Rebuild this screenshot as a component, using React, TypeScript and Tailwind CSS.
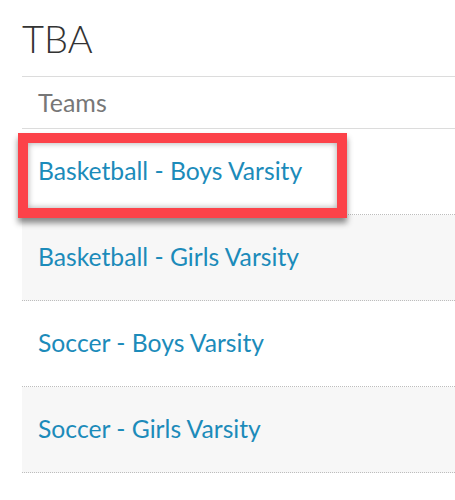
import React from 'react';

const teams = [
  'Basketball - Boys Varsity',
  'Basketball - Girls Varsity',
  'Soccer - Boys Varsity',
  'Soccer - Girls Varsity',
];

export default function App() {
  return (
    <div className="w-[455px] h-[500px] bg-white overflow-hidden" style={{ fontFamily: 'Lato, "Open Sans", sans-serif' }}>
      <div className="pl-[22px]">
        <h1 className="h-[76px] pt-[16px] text-[38px] leading-[44px] font-light text-[#333]">TBA</h1>
        <div className="border-t border-[#dcdcdc] border-b h-[53px] flex items-center pl-[16px] text-[25px] text-[#777]">
          Teams
        </div>
        <div className="relative">
          {teams.map((t, i) => (
            <div
              key={t}
              className={`h-[86px] flex items-center pl-[16px] pb-[2px] border-b border-dotted border-[#bdbdbd] ${i % 2 === 1 ? 'bg-[#f7f7f7]' : 'bg-white'}`}
            >
              <a className="text-[24.7px] text-[#1c8bba] cursor-pointer">{t}</a>
            </div>
          ))}
          {/* highlight annotation */}
          <div className="absolute left-[-4px] top-[4px] w-[329px] h-[85px] border-[10px] border-[#fc4249] shadow-[0_5px_6px_rgba(0,0,0,0.45),inset_0_0_6px_rgba(0,0,0,0.35)] pointer-events-none" />
        </div>
      </div>
    </div>
  );
}
